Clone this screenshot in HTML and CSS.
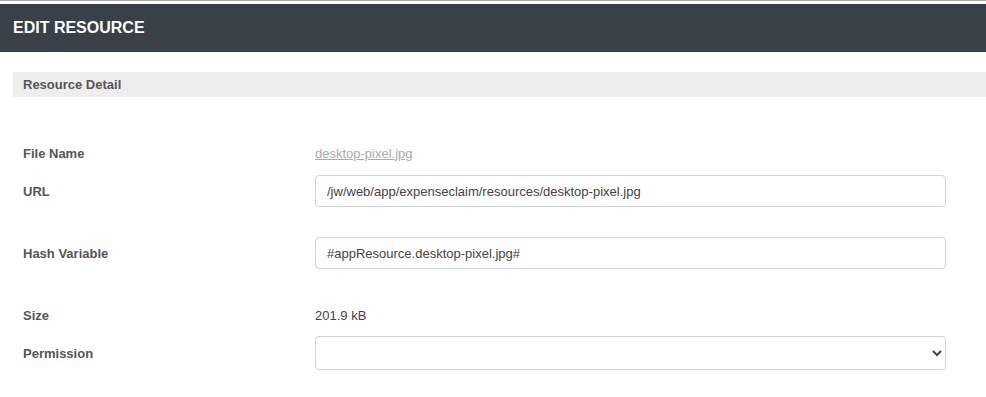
FILE: index.html
```html
<!DOCTYPE html>
<html lang="en">

<head>
  <meta charset="UTF-8">
  <meta name="viewport" content="width=device-width, initial-scale=1.0">
  <title>Edit Resource</title>
  <link rel="stylesheet" href="styles.css">
</head>

<body>
  <div class="page-header">
    <h1>EDIT RESOURCE</h1>
  </div>

  <div class="form-body">
    <div class="section-title">Resource Detail</div>

    <div class="form-rows">
      <div class="form-row">
        <label class="form-label">File Name</label>
        <div class="form-value"><a href="#" class="file-link">desktop-pixel.jpg</a></div>
      </div>

      <div class="form-row has-help">
        <label class="form-label" for="url">URL</label>
        <div class="form-value">
          <input type="text" id="url" class="text-input" value="/jw/web/app/expenseclaim/resources/desktop-pixel.jpg">
        </div>
      </div>

      <div class="form-row has-help">
        <label class="form-label" for="hashVar">Hash Variable</label>
        <div class="form-value">
          <input type="text" id="hashVar" class="text-input" value="#appResource.desktop-pixel.jpg#">
        </div>
      </div>

      <div class="form-row size-row">
        <label class="form-label">Size</label>
        <div class="form-value size-text">201.9 kB</div>
      </div>

      <div class="form-row">
        <label class="form-label" for="permission">Permission</label>
        <div class="form-value">
          <select id="permission" class="select-input">
            <option value=""></option>
          </select>
        </div>
      </div>
    </div>
  </div>
</body>

</html>
```

FILE: styles.css
```css
body {
  font-family: "Liberation Sans", Arial, sans-serif;
  font-size: 13px;
  color: #555;
  margin: 0;
  padding: 0;
  background-color: #fff;
  border-top: 1px solid #a9a9a9;
}

.page-header {
  margin-top: 3px;
  height: 48px;
  background-color: #394048;
  padding: 0 13px;
}

.page-header h1 {
  margin: 0;
  font-size: 16px;
  line-height: 47px;
  color: #fff;
  font-weight: bold;
}

.form-body {
  padding: 20px 0 0 13px;
}

.section-title {
  background-color: #eeeeee;
  height: 25px;
  line-height: 25px;
  padding: 0 10px;
  font-weight: bold;
  color: #555;
}

.form-rows {
  padding: 40px 40px 0 10px;
}

.form-row {
  display: flex;
  align-items: center;
  min-height: 32px;
  margin-bottom: 6px;
}

.form-row.has-help {
  margin-bottom: 30px;
}

.form-row.size-row {
  margin-bottom: 5px;
}

.form-label {
  width: 292px;
  flex-shrink: 0;
  font-weight: bold;
  color: #555;
}

.form-value {
  flex: 1;
}

.file-link {
  color: #aaa;
  text-decoration: underline;
}

.size-text {
  color: #444;
}

.text-input {
  box-sizing: border-box;
  width: 100%;
  height: 32px;
  padding: 0 11px;
  border: 1px solid #ced4da;
  border-radius: 4px;
  font-family: inherit;
  font-size: 13px;
  color: #444;
  outline: none;
}

.select-input {
  box-sizing: border-box;
  width: 100%;
  height: 34px;
  padding: 0 8px;
  border: 1px solid #ced4da;
  border-radius: 4px;
  background-color: #fff;
  font-family: inherit;
  font-size: 13px;
  color: #444;
}
```
